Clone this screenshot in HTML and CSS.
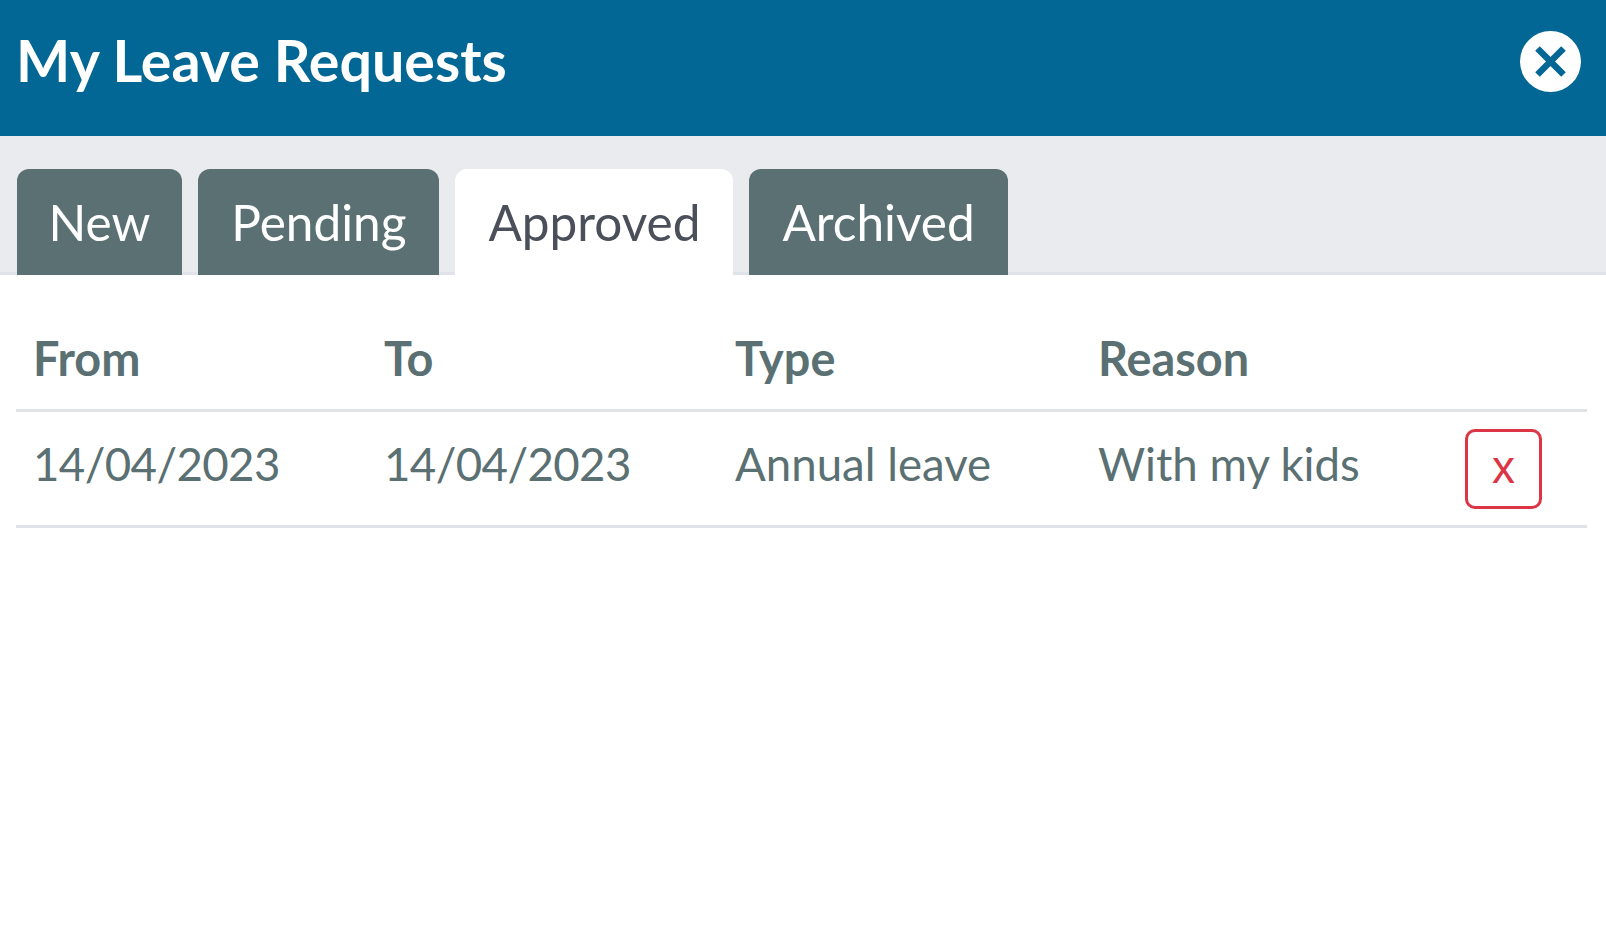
FILE: index.html
```html
<!DOCTYPE html>
<html lang="en">
<head>
  <meta charset="UTF-8" />
  <title>My Leave Requests</title>
  <link rel="stylesheet" href="styles.css">
</head>
<body>

  <!-- header -->
  <div class="header">
    <h1>My Leave Requests</h1>
    <button class="close-btn" aria-label="Close">
      <svg viewBox="0 0 31 31" width="31" height="31">
        <path d="M2.5 2.5 L28.5 28.5 M28.5 2.5 L2.5 28.5" stroke="#026794" stroke-width="6.5" fill="none"/>
      </svg>
    </button>
  </div>

  <!-- tabs -->
  <div class="tabs">
    <button class="tab">New</button>
    <button class="tab">Pending</button>
    <button class="tab active">Approved</button>
    <button class="tab">Archived</button>
  </div>

  <!-- requests -->
  <div class="content">
    <table class="requests">
      <thead>
        <tr>
          <th class="col-from">From</th>
          <th class="col-to">To</th>
          <th class="col-type">Type</th>
          <th class="col-reason">Reason</th>
          <th></th>
        </tr>
      </thead>
      <tbody>
        <tr>
          <td class="date">14/04/2023</td>
          <td class="date">14/04/2023</td>
          <td>Annual leave</td>
          <td>With my kids</td>
          <td class="col-action"><button class="cancel-btn">x</button></td>
        </tr>
      </tbody>
    </table>
  </div>

</body>
</html>
```

FILE: styles.css
```css
body {
  margin: 0;
  font-family: Lato, "Open Sans", sans-serif;
  background-color: white;
  color: #5a7072;
}

.header {
  display: flex;
  align-items: center;
  justify-content: space-between;
  height: 136px;
  padding: 0 25px 14px 16px;
  box-sizing: border-box;
  background-color: #026794;
}

.header h1 {
  margin: 0 0 4px;
  font-size: 57.4px;
  font-weight: 700;
  color: white;
}

.close-btn {
  display: flex;
  align-items: center;
  justify-content: center;
  width: 61px;
  height: 61px;
  padding: 0;
  border: none;
  border-radius: 50%;
  background-color: white;
}

.tabs {
  display: flex;
  gap: 16px;
  height: 139px;
  padding: 33px 16px 0 16.5px;
  box-sizing: border-box;
  background-color: #e9ebef;
  border-bottom: 3px solid #e0e3e8;
}

.tab {
  height: 106px;
  padding: 0 33px;
  border: none;
  border-radius: 12px 12px 0 0;
  background-color: #5a7072;
  color: white;
  font-family: inherit;
  font-size: 49.5px;
}

.tab:first-child {
  padding: 0 32px;
}

.tab.active {
  background-color: white;
  color: #4a4f5a;
}

.content {
  padding: 24px 19px 0 16px;
}

.requests {
  width: 100%;
  border-collapse: collapse;
  table-layout: fixed;
}

.requests th,
.requests td {
  padding: 0 0 0 17px;
  text-align: left;
  font-size: 45.6px;
  border-bottom: 3px solid #e0e3e8;
}

.requests th {
  height: 102px;
  padding-top: 8px;
  font-size: 46.8px;
  font-weight: 700;
}

.requests td {
  height: 102px;
  padding-bottom: 11px;
}

.requests td.date {
  letter-spacing: -0.6px;
}

.requests td.col-action {
  padding-bottom: 0;
}

.col-from,
.col-to {
  width: 334px;
}

.col-type {
  width: 346px;
}

.col-reason {
  width: 350px;
}

.cancel-btn {
  width: 77px;
  height: 80px;
  padding: 0 0 4px;
  border: 3px solid #dc3545;
  border-radius: 10px;
  background-color: white;
  color: #dc3545;
  font-family: "Liberation Sans", sans-serif;
  font-size: 46px;
}
```
